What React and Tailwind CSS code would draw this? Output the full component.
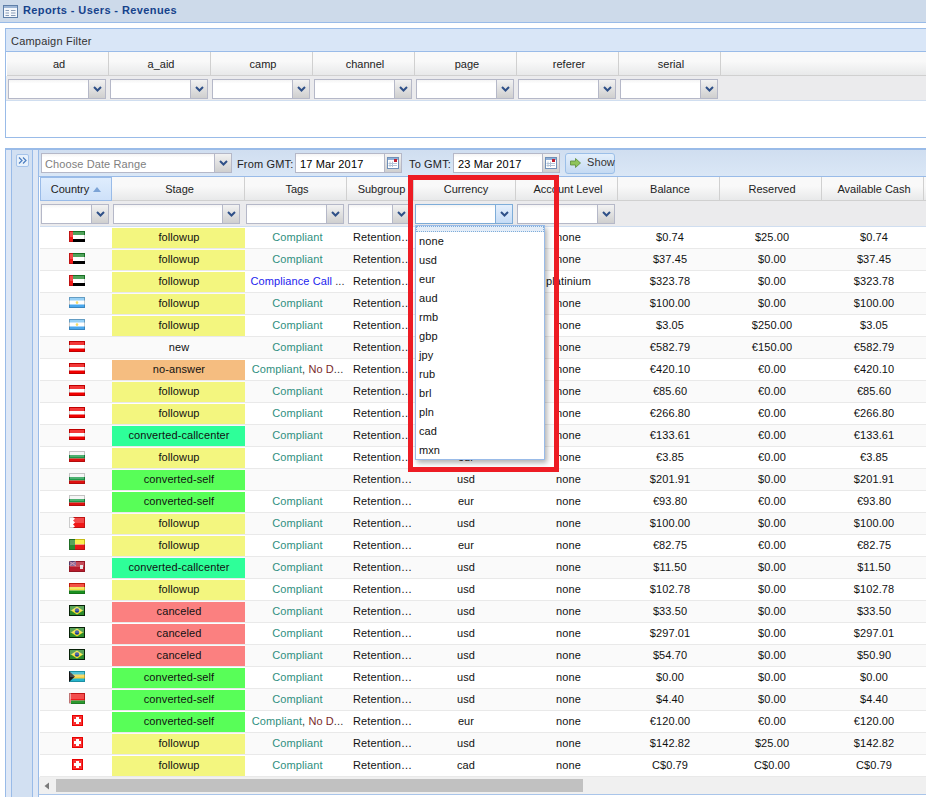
const FILTER_COLS = ['ad', 'a_aid', 'camp', 'channel', 'page', 'referer', 'serial']

const GRID_COLS = [
  { label: 'Country', w: 'w-[72px]', combo: 'w-[68px]' },
  { label: 'Stage', w: 'w-[133px]', combo: 'w-[127px]' },
  { label: 'Tags', w: 'w-[102px]', combo: 'w-[98px]' },
  { label: 'Subgroup', w: 'w-[67px]', combo: 'w-[62px]' },
  { label: 'Currency', w: 'w-[102px]', combo: 'w-[98px]', focus: true },
  { label: 'Account Level', w: 'w-[102px]', combo: 'w-[98px]' },
  { label: 'Balance', w: 'w-[102px]' },
  { label: 'Reserved', w: 'w-[102px]' },
  { label: 'Available Cash', w: 'w-[102px]' },
  { label: '', w: 'w-[40px]' },
]

const CURRENCIES = ['none', 'usd', 'eur', 'aud', 'rmb', 'gbp', 'jpy', 'rub', 'brl', 'pln', 'cad', 'mxn']

const STAGE_BG = {
  followup: 'bg-[#f3f67f]',
  new: '',
  'no-answer': 'bg-[#f5bd80]',
  'converted-callcenter': 'bg-[#2eff99]',
  'converted-self': 'bg-[#58fe58]',
  canceled: 'bg-[#fb8080]',
}

// flag, stage, tag kind, currency, level, balance, reserved, cash
const ROWS = [
  ['ae', 'followup', 'ok', 'usd', 'none', '$0.74', '$25.00', '$0.74'],
  ['ae', 'followup', 'ok', 'usd', 'none', '$37.45', '$0.00', '$37.45'],
  ['ae', 'followup', 'call', 'usd', 'platinium', '$323.78', '$0.00', '$323.78'],
  ['ar', 'followup', 'ok', 'usd', 'none', '$100.00', '$0.00', '$100.00'],
  ['ar', 'followup', 'ok', 'usd', 'none', '$3.05', '$250.00', '$3.05'],
  ['at', 'new', 'ok', 'eur', 'none', '€582.79', '€150.00', '€582.79'],
  ['at', 'no-answer', 'both', 'eur', 'none', '€420.10', '€0.00', '€420.10'],
  ['at', 'followup', 'ok', 'eur', 'none', '€85.60', '€0.00', '€85.60'],
  ['at', 'followup', 'ok', 'eur', 'none', '€266.80', '€0.00', '€266.80'],
  ['at', 'converted-callcenter', 'ok', 'eur', 'none', '€133.61', '€0.00', '€133.61'],
  ['bg', 'followup', 'ok', 'eur', 'none', '€3.85', '€0.00', '€3.85'],
  ['bg', 'converted-self', '', 'usd', 'none', '$201.91', '$0.00', '$201.91'],
  ['bg', 'converted-self', 'ok', 'eur', 'none', '€93.80', '€0.00', '€93.80'],
  ['bh', 'followup', 'ok', 'usd', 'none', '$100.00', '$0.00', '$100.00'],
  ['bj', 'followup', 'ok', 'eur', 'none', '€82.75', '€0.00', '€82.75'],
  ['bm', 'converted-callcenter', 'ok', 'usd', 'none', '$11.50', '$0.00', '$11.50'],
  ['bo', 'followup', 'ok', 'usd', 'none', '$102.78', '$0.00', '$102.78'],
  ['br', 'canceled', 'ok', 'usd', 'none', '$33.50', '$0.00', '$33.50'],
  ['br', 'canceled', 'ok', 'usd', 'none', '$297.01', '$0.00', '$297.01'],
  ['br', 'canceled', 'ok', 'usd', 'none', '$54.70', '$0.00', '$50.90'],
  ['bs', 'converted-self', 'ok', 'usd', 'none', '$0.00', '$0.00', '$0.00'],
  ['by', 'converted-self', 'ok', 'usd', 'none', '$4.40', '$0.00', '$4.40'],
  ['ch', 'converted-self', 'both', 'eur', 'none', '€120.00', '€0.00', '€120.00'],
  ['ch', 'followup', 'ok', 'usd', 'none', '$142.82', '$25.00', '$142.82'],
  ['ch', 'followup', 'ok', 'cad', 'none', 'C$0.79', 'C$0.00', 'C$0.79'],
]

function Flag({ code }) {
  if (code === 'ch') {
    return (
      <svg width="16" height="11" viewBox="0 0 16 11" className="block">
        <rect x="3" width="11" height="11" fill="#e80000" />
        <rect x="4" y="1" width="9" height="9" fill="#f83030" />
        <rect x="7" y="2" width="3" height="7" fill="#fff" />
        <rect x="5" y="4" width="7" height="3" fill="#fff" />
      </svg>
    )
  }
  return (
    <svg width="16" height="11" viewBox="0 0 16 11" className="block">
      {code === 'ae' && (
        <>
          <rect width="16" height="4" fill="#1f8a2e" />
          <rect y="4" width="16" height="4" fill="#fff" />
          <rect y="8" width="16" height="3" fill="#000" />
          <rect width="4" height="11" fill="#f01818" />
        </>
      )}
      {code === 'ar' && (
        <>
          <rect width="16" height="11" fill="#fff" />
          <rect width="16" height="3.5" fill="#7cc4f4" />
          <rect y="7.5" width="16" height="3.5" fill="#4aa8ee" />
          <circle cx="8" cy="5.5" r="1.3" fill="#f4d23c" />
        </>
      )}
      {code === 'at' && (
        <>
          <rect width="16" height="11" fill="#f00000" />
          <rect y="4" width="16" height="3.5" fill="#fff" />
        </>
      )}
      {code === 'bg' && (
        <>
          <rect width="16" height="4" fill="#f4f4f4" />
          <rect y="4" width="16" height="3.5" fill="#1d9a4a" />
          <rect y="7.5" width="16" height="3.5" fill="#e01010" />
        </>
      )}
      {code === 'bh' && (
        <>
          <rect width="16" height="11" fill="#f01818" />
          <path d="M0 0H4L6 1.8 4 3.6 6 5.5 4 7.4 6 9.2 4 11H0Z" fill="#fff" />
        </>
      )}
      {code === 'bj' && (
        <>
          <rect width="16" height="5.5" fill="#f8ec20" />
          <rect y="5.5" width="16" height="5.5" fill="#e81818" />
          <rect width="6" height="11" fill="#2a8a30" />
        </>
      )}
      {code === 'bm' && (
        <>
          <rect width="16" height="11" fill="#b81c2c" />
          <rect width="7" height="5" fill="#6a4a86" />
          <path d="M0 0 7 5M7 0 0 5" stroke="#d08090" strokeWidth="1" />
          <rect x="11" y="4" width="3" height="4" fill="#e4e4e4" />
        </>
      )}
      {code === 'bo' && (
        <>
          <rect width="16" height="4" fill="#f02010" />
          <rect y="4" width="16" height="3.5" fill="#f0e040" />
          <rect y="7.5" width="16" height="3.5" fill="#1a9020" />
        </>
      )}
      {code === 'br' && (
        <>
          <rect width="16" height="11" fill="#0a2a0a" />
          <rect x="1" y="1" width="14" height="9" fill="#2c8a2c" />
          <path d="M8 1.5 14 5.5 8 9.5 2 5.5Z" fill="#f0e030" />
          <circle cx="8" cy="5.5" r="2.2" fill="#1a3a90" />
        </>
      )}
      {code === 'bs' && (
        <>
          <rect width="16" height="11" fill="#25b4cc" />
          <rect y="3.5" width="16" height="4" fill="#f4d040" />
          <path d="M0 0 6 5.5 0 11Z" fill="#1a1a1a" />
        </>
      )}
      {code === 'by' && (
        <>
          <rect width="16" height="7.5" fill="#f01c1c" />
          <rect y="7.5" width="16" height="3.5" fill="#2a9a30" />
          <rect width="2" height="11" fill="#fff" />
          <path d="M0 1H2M0 3H2M0 5H2M0 7H2M0 9H2" stroke="#e02020" strokeWidth="1" />
        </>
      )}
      {/* darker rim and the glossy band these icon flags have */}
      <rect x="1" y="1" width="14" height="5" fill="#fff" opacity="0.22" />
      <rect x="0.5" y="0.5" width="15" height="10" fill="none" stroke="#000" strokeOpacity="0.2" />
    </svg>
  )
}

function Chevron() {
  return (
    <svg width="9" height="6" viewBox="0 0 9 6" className="block">
      <path d="M1 1 4.5 4.5 8 1" fill="none" stroke="#2f5088" strokeWidth="2" />
    </svg>
  )
}

function Combo({ width, focus, placeholder }) {
  return (
    <div
      className={`flex h-[20px] border ${width} ${focus ? 'border-[#7eadd9]' : 'border-[#b5b8c8]'} bg-white`}
    >
      <div className="flex-1 min-w-0 pl-[3px] leading-[20px] text-[11px] tracking-[0.1px] text-[#808080] bg-linear-to-b from-[#f4f4f4] to-white to-[20%]">
        {placeholder}
      </div>
      <div
        className={`w-[17px] flex items-center justify-center border-l ${
          focus
            ? 'border-[#7eadd9] bg-linear-to-b from-[#e4effc] to-[#c6dcf6]'
            : 'border-[#b5b8c8] bg-linear-to-b from-[#f2f2f2] to-[#cfcfcf]'
        }`}
      >
        <Chevron />
      </div>
    </div>
  )
}

function CalendarIcon() {
  return (
    <svg width="12" height="12" viewBox="0 0 12 12" className="block">
      <rect x="0.5" y="0.5" width="11" height="11" fill="#fff" stroke="#6f8fb8" />
      <rect x="1" y="1" width="10" height="2" fill="#8fb0d8" />
      <path d="M3 4.5V10M5.5 4.5V10M1.5 6.5H10M1.5 8.5H10" stroke="#b4c4d8" strokeWidth="1" />
      <rect x="7" y="2" width="3" height="3" fill="#c02030" />
    </svg>
  )
}

function DateBox({ value, width }) {
  return (
    <div className={`flex h-[20px] border border-[#b5b8c8] bg-white ${width}`}>
      <div className="flex-1 pl-[4px] leading-[20px] text-[11px] text-black bg-linear-to-b from-[#f4f4f4] to-white to-[20%]">
        {value}
      </div>
      <div className="w-[17px] flex items-center justify-center border-l border-[#b5b8c8] bg-linear-to-b from-[#f2f2f2] to-[#cfcfcf]">
        <CalendarIcon />
      </div>
    </div>
  )
}

function HeaderCell({ label, width }) {
  const sorted = label === 'Country'
  return (
    <div
      className={`shrink-0 h-full flex items-center justify-center gap-[4px] pt-[1px] border-b text-[11px] text-[#222] ${width} ${
        sorted
          ? 'border border-[#99bbe8] bg-linear-to-b from-[#dfedfd] to-[#cee1f9]'
          : 'pl-[3px] border-r border-r-[#d0d0d0] border-b-[#d0d0d0] bg-linear-to-b from-[#f9f9f9] from-40% to-[#e8e9ea]'
      }`}
    >
      {label}
      {sorted && (
        <svg width="8" height="5" viewBox="0 0 8 5" className="block">
          <path d="M4 0 8 5H0Z" fill="#7ba3d6" />
        </svg>
      )}
    </div>
  )
}

function Tags({ kind }) {
  if (kind === 'ok') return <span className="text-[#2f8f80]">Compliant</span>
  if (kind === 'call') {
    return (
      <span className="text-[#333]">
        <span className="text-[#2323ee]">Compliance Call</span> ...
      </span>
    )
  }
  if (kind === 'both') {
    return (
      <span className="text-[#333]">
        <span className="text-[#2f8f80]">Compliant</span>, <span className="text-[#7a2a2a]">No D</span>...
      </span>
    )
  }
  return null
}

function GridRow({ row, odd }) {
  const [flag, stage, tag, currency, level, balance, reserved, cash] = row
  return (
    <div className={`flex h-[22px] pt-[1px] border-b border-[#e9e9e9] text-[11px] tracking-[0.1px] text-[#111] ${odd ? 'bg-[#fafafa]' : 'bg-white'}`}>
      <div className="w-[72px] shrink-0 flex justify-center pt-[3px] pl-[2px]">
        <Flag code={flag} />
      </div>
      <div className={`w-[133px] shrink-0 pl-[1px] text-center leading-[18px] ${STAGE_BG[stage]}`}>{stage}</div>
      <div className="w-[102px] shrink-0 pl-[3px] text-center leading-[18px] whitespace-nowrap overflow-hidden">
        <Tags kind={tag} />
      </div>
      <div className="w-[67px] shrink-0 pl-[6px] leading-[18px] whitespace-nowrap overflow-hidden">Retention…</div>
      <div className="w-[102px] shrink-0 pl-[2px] text-center leading-[18px]">{currency}</div>
      <div className="w-[102px] shrink-0 pl-[3px] text-center leading-[18px]">{level}</div>
      <div className="w-[102px] shrink-0 pl-[2px] text-center leading-[18px]">{balance}</div>
      <div className="w-[102px] shrink-0 pl-[2px] text-center leading-[18px]">{reserved}</div>
      <div className="w-[102px] shrink-0 pl-[2px] text-center leading-[18px]">{cash}</div>
    </div>
  )
}

export default function App() {
  return (
    <div className="relative w-[926px] h-[797px] overflow-hidden bg-white font-['Liberation_Sans',Arial,sans-serif]">
      <header className="h-[23px] flex items-center gap-[5px] pl-[3px] bg-[#cddaea] border-b border-[#99bbe8]">
        <svg width="15" height="13" viewBox="0 0 15 13" className="block">
          <rect x="0.5" y="0.5" width="14" height="12" fill="#f4f7fb" stroke="#5f7fa8" />
          <rect x="1" y="1" width="13" height="2" fill="#9db6d6" />
          <path d="M2.5 5.5H6M8 5.5H12.5M2.5 8H6M8 8H12.5M2.5 10.5H6M8 10.5H12.5" stroke="#8a9db8" strokeWidth="1" />
        </svg>
        <h1 className="pb-[2px] text-[11px] font-bold text-[#15428b] tracking-[0.4px]">Reports - Users - Revenues</h1>
      </header>

      <section className="mt-[5px] ml-[5px] h-[110px] border-t border-l border-b border-[#99bbe8]">
        <div className="h-[23px] flex items-center pl-[5px] pt-[3px] bg-[#d9e6f7] border-b border-[#99bbe8] text-[11px] tracking-[0.2px] text-[#333]">
          Campaign Filter
        </div>
        <div className="flex h-[24px] pl-[1px]">
          {FILTER_COLS.map(c => (
            <HeaderCell key={c} label={c} width="w-[102px]" />
          ))}
          <div className="flex-1 border-b border-[#d0d0d0] bg-linear-to-b from-[#f9f9f9] from-40% to-[#e8e9ea]" />
        </div>
        <div className="flex items-center h-[25px] pl-[2px] pt-[2px] bg-[#ebebed] border-b border-[#d0def0]">
          {FILTER_COLS.map(c => (
            <div key={c} className="w-[102px] shrink-0">
              <Combo width="w-[98px]" />
            </div>
          ))}
        </div>
      </section>

      <section className="mt-[10px] ml-[5px] h-[649px] flex border-t-2 border-l border-[#99bbe8]">
        <div className="w-[6px] shrink-0 bg-[#dfe8f6] border-r border-[#99bbe8]" />
        <div className="w-[21px] shrink-0 bg-[#d2e0f2] border-r border-[#99bbe8] pt-[4px] pl-[4px]">
          <div className="w-[13px] h-[13px] flex items-center justify-center rounded-[2px] border border-[#a5c3ea] bg-[#e8f1fb]">
            <svg width="9" height="7" viewBox="0 0 9 7" className="block">
              <path d="M1 .5 4 3.5 1 6.5M5 .5 8 3.5 5 6.5" fill="none" stroke="#4a7dc0" strokeWidth="1.2" />
            </svg>
          </div>
        </div>
        <div className="w-[6px] shrink-0 bg-[#dfe8f6] border-r border-[#99bbe8]" />

        <div className="flex-1 min-w-0 overflow-hidden">
          <div className="flex items-center h-[27px] pl-[2px] border-b border-[#99bbe8] bg-linear-to-b from-[#d0def0] to-[#dae7f6] text-[11px] tracking-[0.15px] text-[#222]">
            <Combo width="w-[191px]" placeholder="Choose Date Range" />
            <span className="ml-[5px] w-[58px] pt-[2px] whitespace-nowrap">From GMT:</span>
            <DateBox value="17 Mar 2017" width="w-[107px]" />
            <span className="ml-[7px] w-[44px] pt-[2px] whitespace-nowrap">To GMT:</span>
            <DateBox value="23 Mar 2017" width="w-[107px]" />
            <button className="ml-[5px] flex items-center gap-[6px] w-[50px] h-[21px] pl-[4px] pb-[1px] rounded-[3px] border border-[#9bbfe8] bg-linear-to-b from-[#e3effc] to-[#c5daf2] text-[11px] tracking-[0.1px] text-[#333]">
              <svg width="11" height="10" viewBox="0 0 11 10" className="block shrink-0">
                <path d="M0.5 3H5.5V0.5L10.5 5 5.5 9.5V7H0.5Z" fill="#8fc45a" stroke="#5c8a3a" strokeWidth="0.8" />
              </svg>
              Show
            </button>
          </div>

          <div className="pl-[1px] w-[900px]">
            <div className="flex h-[24px]">
              {GRID_COLS.map(c => (
                <HeaderCell key={c.label || 'end'} label={c.label} width={c.w} />
              ))}
            </div>
            <div className="flex items-center h-[26px] bg-[#ebebed] border-b border-[#d0def0]">
              {GRID_COLS.map(c => (
                <div key={c.label || 'end'} className={`shrink-0 pl-[1px] ${c.w}`}>
                  {c.combo && <Combo width={c.combo} focus={c.focus} />}
                </div>
              ))}
            </div>
            {ROWS.map((r, i) => (
              <GridRow key={i} row={r} odd={i % 2 === 1} />
            ))}
          </div>

          <div className="flex items-center h-[18px] bg-[#f0f0f0] border-b border-[#a9c5ea]">
            <svg width="17" height="16" viewBox="0 0 17 16" className="block shrink-0">
              <path d="M10 4.5V11.5L5.5 8Z" fill="#7a7a7a" />
            </svg>
            <div className="w-[527px] h-[13px] bg-[#c1c1c1]" />
          </div>
        </div>
      </section>

      {/* open currency list and the highlight box drawn over the grid */}
      <div className="absolute left-[415px] top-[225px] w-[130px] h-[235px] border border-[#99bbe8] bg-white shadow-[2px_3px_5px_rgba(0,0,0,0.3)] text-[11px] tracking-[0.1px] text-[#111]">
        <div className="h-[6px] border border-dotted border-[#7eadd9] bg-[#e4edf8]" />
        {CURRENCIES.map(c => (
          <div key={c} className="h-[19px] pl-[3px] leading-[19px]">
            {c}
          </div>
        ))}
      </div>
      <div className="absolute left-[408px] top-[175px] w-[151px] h-[297px] border-[5px] border-[#ed1c24]" />
    </div>
  )
}
